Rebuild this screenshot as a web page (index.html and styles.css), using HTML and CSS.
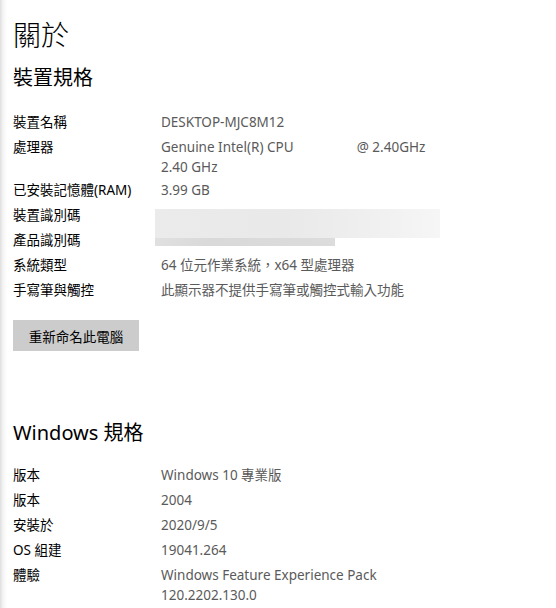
FILE: index.html
```html
<!DOCTYPE html>
<html lang="zh-Hant">
<head>
<meta charset="utf-8">
<link rel="stylesheet" href="styles.css">
</head>
<body>
<main class="page">
  <h1 class="title">關於</h1>
  <h2 class="section-title">裝置規格</h2>
  <div class="specs">
    <div class="label">裝置名稱</div><div class="value">DESKTOP-MJC8M12</div>
    <div class="label">處理器</div><div class="value pre tall">Genuine Intel(R) CPU                  @ 2.40GHz
2.40 GHz</div>
    <div class="label">已安裝記憶體(RAM)</div><div class="value">3.99 GB</div>
    <div class="label">裝置識別碼</div>
    <div class="value blur-cell">
      <div class="blur">
        <div class="blur-top"></div>
        <div class="blur-bottom"></div>
      </div>
    </div>
    <div class="label">產品識別碼</div>
    <div class="label">系統類型</div><div class="value">64 位元作業系統，x64 型處理器</div>
    <div class="label">手寫筆與觸控</div><div class="value">此顯示器不提供手寫筆或觸控式輸入功能</div>
  </div>
  <button class="rename">重新命名此電腦</button>
  <h2 class="section-title win">Windows 規格</h2>
  <div class="specs win-specs">
    <div class="label">版本</div><div class="value">Windows 10 專業版</div>
    <div class="label">版本</div><div class="value">2004</div>
    <div class="label">安裝於</div><div class="value">2020/9/5</div>
    <div class="label">OS 組建</div><div class="value">19041.264</div>
    <div class="label">體驗</div><div class="value tall">Windows Feature Experience Pack<br>120.2202.130.0</div>
  </div>
</main>
</body>
</html>
```

FILE: styles.css
```css
html, body {
  margin: 0;
  padding: 0;
}
body {
  background: linear-gradient(to right, #dedede 0, #f4f4f4 3px, #ffffff 7px);
  font-family: "Segoe UI", "Noto Sans", "Noto Sans CJK TC", sans-serif;
  color: #000;
  min-height: 608px;
  overflow: hidden;
}
.page {
  padding: 16px 0 0 13px;
  display: flex;
  flex-direction: column;
  align-items: flex-start;
}
.title {
  margin: 0;
  font-family: "Noto Sans CJK TC", sans-serif;
  font-weight: 300;
  font-size: 28px;
  line-height: 36px;
}
.section-title {
  margin: 12px 0 0 0;
  height: 28px;
  font-family: "Noto Sans", "Noto Sans CJK TC", sans-serif;
  font-weight: 400;
  font-size: 20px;
  line-height: 28px;
}
.section-title.win {
  margin-top: 68px;
}
.specs {
  margin-top: 20px;
  display: grid;
  grid-template-columns: 148px 1fr;
  row-gap: 5px;
  font-size: 13.5px;
  line-height: 20px;
}
.win-specs {
  margin-top: 18px;
}
.label {
  height: 20px;
  font-family: "Noto Sans", "Noto Sans CJK TC", sans-serif;
  color: #000;
}
.value {
  height: 20px;
  font-family: "Noto Sans", "Noto Sans CJK TC", sans-serif;
  color: #5a5a5a;
}
.value.tall {
  height: 38px;
}
.pre {
  white-space: pre;
}
.blur-cell {
  grid-row: span 2;
  height: auto;
  margin-left: -6px;
  padding-top: 4px;
}
.blur {
  width: 285px;
  display: flex;
  flex-direction: column;
}
.blur-top {
  height: 29px;
  background: linear-gradient(to right, #ebebeb 0, #e9e9e9 45%, #ededed 65%, #f2f2f2 85%, #f6f6f6 100%);
}
.blur-bottom {
  height: 8px;
  width: 180px;
  background: linear-gradient(to right, #e0e0e0 0, #d9d9d9 30%, #dcdcdc 100%);
}
.rename {
  margin-top: 20px;
  height: 31px;
  width: 126px;
  padding: 0;
  border: none;
  background: #cccccc;
  color: #000;
  font-family: "Noto Sans CJK TC", sans-serif;
  font-size: 13.5px;
}
```
